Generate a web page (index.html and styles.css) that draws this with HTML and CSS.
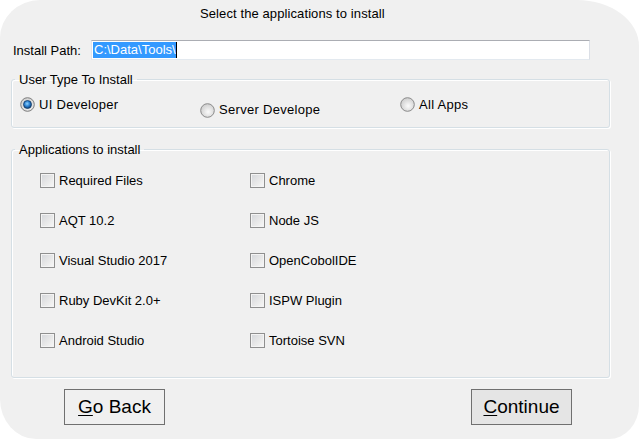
FILE: index.html
```html
<!DOCTYPE html>
<html>
<head>
<meta charset="utf-8">
<title>Installer</title>
<link rel="stylesheet" href="styles.css">
</head>
<body>
<div class="window">
  <div class="title">Select the applications to install</div>

  <div class="path-row">
    <span class="path-label">Install Path:</span>
    <div class="textbox"><span class="sel">C:\Data\Tools\</span><span class="caret"></span></div>
  </div>

  <fieldset class="group">
    <legend class="legend">User Type To Install</legend>
    <div class="group-user">
      <div class="radio-row">
        <div class="radio-item">
          <svg class="radio" viewBox="0 0 15 15" width="15" height="15">
            <defs>
              <radialGradient id="rgA" cx="55%" cy="60%" r="65%"><stop offset="0" stop-color="#fbfbfb"/><stop offset="1" stop-color="#c9c9c9"/></radialGradient>
              <radialGradient id="dot" cx="45%" cy="40%" r="60%"><stop offset="0" stop-color="#8fd3ff"/><stop offset="0.55" stop-color="#2a7fd0"/><stop offset="1" stop-color="#0a3a6e"/></radialGradient>
            </defs>
            <circle cx="7.5" cy="7.5" r="6.8" fill="url(#rgA)" stroke="#7e7e7e" stroke-width="1"/>
            <circle cx="7.5" cy="7.5" r="4" fill="url(#dot)" stroke="#163f6c" stroke-width="0.8"/>
          </svg>
          <span class="radio-label">UI Developer</span>
        </div>
        <div class="radio-item radio-server">
          <svg class="radio" viewBox="0 0 15 15" width="15" height="15">
            <circle cx="7.5" cy="7.5" r="6.8" fill="url(#rgA)" stroke="#8a8a8a" stroke-width="1"/>
          </svg>
          <span class="radio-label">Server Develope</span>
        </div>
        <div class="radio-item">
          <svg class="radio" viewBox="0 0 15 15" width="15" height="15">
            <circle cx="7.5" cy="7.5" r="6.8" fill="url(#rgA)" stroke="#8a8a8a" stroke-width="1"/>
          </svg>
          <span class="radio-label">All Apps</span>
        </div>
      </div>
    </div>
  </fieldset>

  <fieldset class="group group-apps-box">
    <legend class="legend">Applications to install</legend>
    <div class="group-apps">
      <div class="check-grid">
        <div class="check-item"><span class="check"></span><span class="check-label">Required Files</span></div>
        <div class="check-item"><span class="check"></span><span class="check-label">Chrome</span></div>
        <div class="check-item"><span class="check"></span><span class="check-label">AQT 10.2</span></div>
        <div class="check-item"><span class="check"></span><span class="check-label">Node JS</span></div>
        <div class="check-item"><span class="check"></span><span class="check-label">Visual Studio 2017</span></div>
        <div class="check-item"><span class="check"></span><span class="check-label">OpenCobolIDE</span></div>
        <div class="check-item"><span class="check"></span><span class="check-label">Ruby DevKit 2.0+</span></div>
        <div class="check-item"><span class="check"></span><span class="check-label">ISPW Plugin</span></div>
        <div class="check-item"><span class="check"></span><span class="check-label">Android Studio</span></div>
        <div class="check-item"><span class="check"></span><span class="check-label">Tortoise SVN</span></div>
      </div>
    </div>
  </fieldset>

  <div class="button-row">
    <button class="btn"><u>G</u>o Back</button>
    <button class="btn btn-default"><u>C</u>ontinue</button>
  </div>
</div>
</body>
</html>
```

FILE: styles.css
```css
html, body {
  margin: 0;
  padding: 0;
  background: #ffffff;
}

body {
  font-family: "Liberation Sans", Arial, sans-serif;
  font-size: 13px;
  color: #000;
}

.window {
  width: 639px;
  height: 439px;
  box-sizing: border-box;
  background: #f0f0f0;
  border-radius: 40px 62px 30px 36px / 38px 46px 34px 40px;
  padding: 6px 29px 0 11px;
  overflow: hidden;
}

.title {
  line-height: 15px;
  padding-left: 189px;
  white-space: nowrap;
  letter-spacing: 0.1px;
}

.path-row {
  display: flex;
  align-items: center;
  margin-top: 19px;
  height: 20px;
}

.path-label {
  width: 78px;
  padding-left: 2px;
  line-height: 15px;
}

.textbox {
  box-sizing: border-box;
  width: 499px;
  height: 20px;
  background: #fff;
  border: 1px solid;
  border-color: #abadb3 #dbdfe6 #e3e9ef #e2e3ea;
  padding: 1px 0 0 1px;
  display: flex;
  align-items: flex-start;
}

.sel {
  background: #3399ff;
  color: #fff;
  line-height: 16px;
  padding: 0 0 0 1px;
  font-size: 13px;
}

.caret {
  display: inline-block;
  width: 1px;
  height: 16px;
  background: #000;
}

.group {
  margin: 12px 0 0;
  padding: 0;
  min-inline-size: 0;
  border: 1px solid #d5dfe5;
  border-radius: 3px;
  box-shadow: inset 1px 1px 0 #fff, 1px 1px 0 #fff;
}

.group-apps-box {
  margin-top: 14px;
}

.legend {
  padding: 0 4px;
  margin-left: 3px;
  line-height: 15px;
}

.group-user {
  padding: 10px 0 10px 8px;
}

.radio-row {
  display: grid;
  grid-template-columns: 180px 200px 1fr;
  align-items: start;
  height: 20px;
}

.radio-item {
  display: flex;
  align-items: flex-start;
  gap: 4px;
  white-space: nowrap;
}

.radio {
  display: block;
  flex: none;
}

.radio-label {
  line-height: 20px;
  margin-top: -2px;
  letter-spacing: 0.3px;
}

.radio-server {
  margin-top: 6px;
}

.radio-server .radio-label {
  margin-top: -3px;
}

.group-apps {
  padding: 3px 0 17px 28px;
}

.check-grid {
  display: grid;
  grid-template-columns: 210px 210px;
  grid-auto-rows: 40px;
}

.check-item {
  display: flex;
  align-items: center;
  gap: 4px;
  white-space: nowrap;
}

.check {
  box-sizing: border-box;
  width: 15px;
  height: 15px;
  border: 1px solid #8f8f8f;
  background: linear-gradient(135deg, #d4d6da 0%, #eaeaea 60%, #f8f8f8 100%);
  box-shadow: inset 0 0 0 1px #f4f4f4;
  flex: none;
}

.check-label {
  line-height: 15px;
}

.button-row {
  display: flex;
  justify-content: space-between;
  margin-top: 11px;
  padding: 0 38px 0 53px;
}

.btn {
  box-sizing: border-box;
  width: 101px;
  height: 36px;
  border: 1px solid #707070;
  border-radius: 0;
  background: #f0f0f0;
  font-family: "Liberation Sans", Arial, sans-serif;
  font-size: 19px;
  color: #000;
  padding: 0;
  line-height: 20px;
}

.btn-default {
  background: #e5e5e5;
}

.btn u {
  text-decoration-thickness: 1px;
  text-underline-offset: 2px;
}
```
